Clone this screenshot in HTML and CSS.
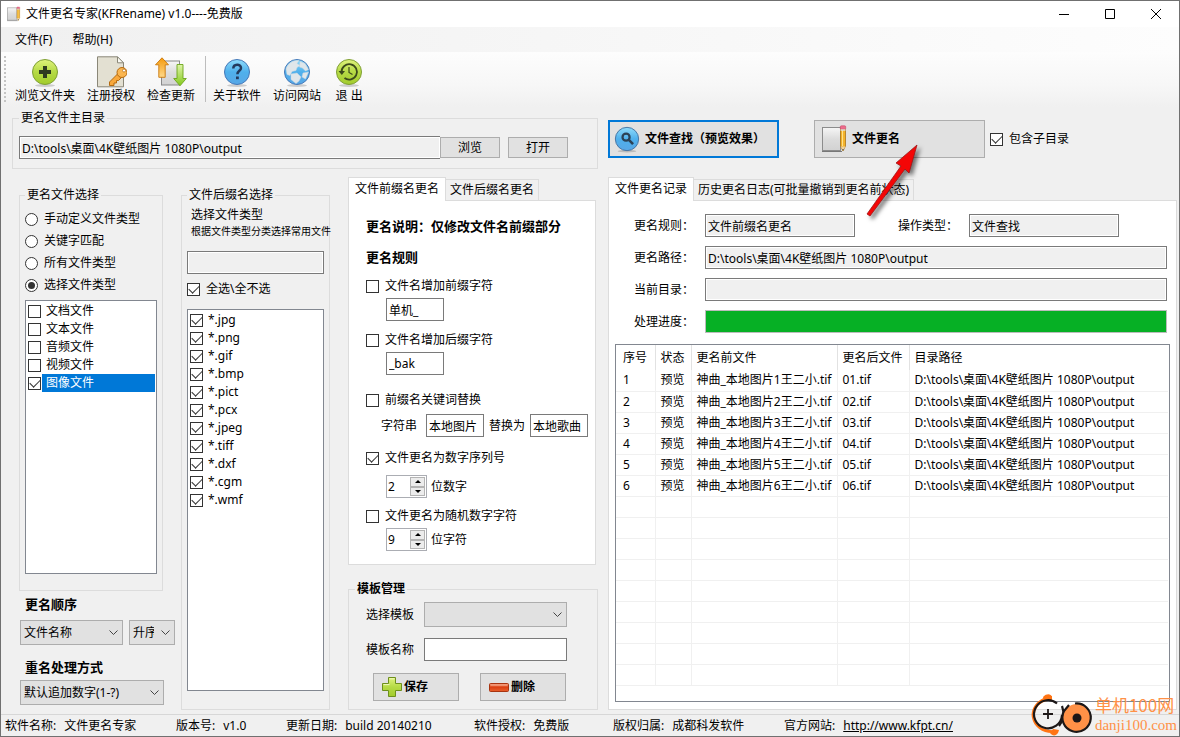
FILE: index.html
```html
<!DOCTYPE html>
<html lang="zh-CN">
<head>
<meta charset="utf-8">
<title>文件更名专家(KFRename) v1.0----免费版</title>
<link rel="stylesheet" href="styles.css">
</head>
<body>
<svg class="defs" aria-hidden="true">
  <defs>
    <linearGradient id="green" x1="0" y1="0" x2="0" y2="1"><stop offset="0" stop-color="#dff27c"/><stop offset=".5" stop-color="#b5da45"/><stop offset="1" stop-color="#a2cc2c"/></linearGradient>
    <linearGradient id="blue" x1="0" y1="0" x2="0" y2="1"><stop offset="0" stop-color="#8fdcfb"/><stop offset=".5" stop-color="#4fb0ec"/><stop offset="1" stop-color="#58a7e6"/></linearGradient>
    <linearGradient id="orange" x1="0" y1="0" x2="0" y2="1"><stop offset="0" stop-color="#f59a0c"/><stop offset="1" stop-color="#ffd98a"/></linearGradient>
    <linearGradient id="lime" x1="0" y1="0" x2="0" y2="1"><stop offset="0" stop-color="#dff5a8"/><stop offset="1" stop-color="#83c81c"/></linearGradient>
    <linearGradient id="paper" x1="0" y1="0" x2="0" y2="1"><stop offset="0" stop-color="#f6f6f6"/><stop offset=".5" stop-color="#dcdcdc"/><stop offset="1" stop-color="#d2d2d2"/></linearGradient>
    <linearGradient id="red" x1="0" y1="0" x2="0" y2="1"><stop offset="0" stop-color="#f08a62"/><stop offset=".5" stop-color="#dc4214"/><stop offset="1" stop-color="#e8602c"/></linearGradient>
    <symbol id="i-note" viewBox="0 0 28 30">
      <rect x="2.500" y="3.500" width="18" height="23" fill="url(#paper)" stroke="#8c8c8c"/>
      <path d="M2 27.500h20" stroke="#777" stroke-width="1"/>
      <path d="M20.500 5h5v17l-2.500 5-2.500-5z" fill="#f3b32b" stroke="#a9741a" stroke-width=".8"/>
      <path d="M22.500 6v16" stroke="#ffe08a"/>
      <rect x="20.300" y="1.800" width="5.400" height="3.500" rx="1" fill="#ee6c8c" stroke="#c44a68" stroke-width=".6"/>
      <path d="M20.500 6h5" stroke="#ddd" stroke-width="1.500"/>
      <path d="M20.800 22.500l2.200 4.500 2.200-4.500z" fill="#f0d3a0"/><path d="M22.200 25l.8 2 .8-2z" fill="#444"/>
    </symbol>
  </defs>
</svg>
<div class="window">
  <header class="titlebar">
    <svg class="app-icon"><use href="#i-note"/></svg>
    <h1 class="title">文件更名专家(KFRename) v1.0----免费版</h1>
    <div class="caption-buttons">
      <button aria-label="最小化"><svg viewBox="0 0 12 12"><path d="M1 6.500h10"/></svg></button>
      <button aria-label="最大化"><svg viewBox="0 0 12 12"><path d="M1.500 1.500h9v9h-9z"/></svg></button>
      <button aria-label="关闭"><svg viewBox="0 0 12 12"><path d="M1 1l10 10M11 1L1 11"/></svg></button>
    </div>
  </header>
  <nav class="menubar"><button>文件(F)</button><button>帮助(H)</button></nav>
  <div class="toolbar">
    <span class="grip"></span>
    <button class="tool"><svg viewBox="0 0 32 32"><ellipse cx="16" cy="29.500" rx="10" ry="1.500" fill="#ccc"/><circle cx="16" cy="16" r="12.500" fill="url(#green)" stroke="#7f9f35"/><path d="M14 10h4v4h4v4h-4v4h-4v-4h-4v-4h4z" fill="#2f3a20"/></svg><span>浏览文件夹</span></button>
    <button class="tool"><svg viewBox="0 0 32 32"><path d="M2.500.8h20l6 6v24h-26z" fill="#e3e0d2" stroke="#8a8778"/><path d="M22.500.8v6h6z" fill="#fbfaf4" stroke="#8a8778"/><path d="M23 17.500L14.500 26v3.500h4.500V27h2.500v-2.500h2l3-3z" fill="#f8a83c" stroke="#b56a10"/><circle cx="27" cy="16.500" r="5" fill="#fbb650" stroke="#b56a10"/><circle cx="29" cy="14.500" r="1.500" fill="#fff" stroke="#b56a10" stroke-width=".7"/></svg><span>注册授权</span></button>
    <button class="tool"><svg viewBox="0 0 32 32"><rect x="6.500" y="5" width="18" height="24" fill="url(#paper)" stroke="#888"/><path d="M7 1.800l6.500 7h-3.300v12.500H3.800V8.800H.5z" fill="url(#orange)" stroke="#c9770a" stroke-width=".9"/><path d="M22 8.500h6v14h3.300L25 29.800l-6.300-7.300H22z" fill="url(#lime)" stroke="#6ba51a" stroke-width=".9"/></svg><span>检查更新</span></button>
    <span class="divider"></span>
    <button class="tool"><svg viewBox="0 0 32 32"><ellipse cx="16" cy="29.500" rx="10" ry="1.500" fill="#ccc"/><circle cx="16" cy="16" r="12.500" fill="url(#blue)" stroke="#4578b8"/><path d="M12.300 12.500c0-5 7.700-5 7.700-.6 0 3-3.600 2.800-3.600 6.300" fill="none" stroke="#243a5c" stroke-width="2.500"/><path d="M15 20.500h2.800v2.700H15z" fill="#243a5c"/></svg><span>关于软件</span></button>
    <button class="tool"><svg viewBox="0 0 32 32"><ellipse cx="16" cy="29.500" rx="10" ry="1.500" fill="#ccc"/><circle cx="16" cy="16" r="12.500" fill="url(#blue)" stroke="#4578b8"/><path d="M5 13c2-6 7-9 13-8.500l-2 3 3 2-3 2-1 3-4 1-2 4-3-1zM19 5.500l5 2 3.500 6-3 1.500-3-3-3-1zM10 18l6-1 4 4-2 4-3 2.500-5-4zM22 17l5.500-1-3 7-3.500-2z" fill="#dfe6ea" stroke="#c9d6e0" stroke-width=".5"/></svg><span>访问网站</span></button>
    <button class="tool"><svg viewBox="0 0 32 32"><ellipse cx="16" cy="29.500" rx="10" ry="1.500" fill="#ccc"/><circle cx="16" cy="16" r="12.500" fill="url(#green)" stroke="#7f9f35"/><path d="M8.500 16a7.700 7.700 0 1 1 3 6" fill="none" stroke="#3c4a1c" stroke-width="1.800"/><path d="M5.500 15h6.500l-3.200 4z" fill="#3c4a1c"/><path d="M16 11v5.500l3.500 2" fill="none" stroke="#3c4a1c" stroke-width="1.200"/></svg><span>退 出</span></button>
  </div>

  <main class="main">
    <section class="left">
      <fieldset class="group dir-group">
        <legend>更名文件主目录</legend>
        <input class="field readonly dir-field" type="text" aria-label="更名文件主目录" value="D:\tools\桌面\4K壁纸图片 1080P\output" readonly>
        <button class="btn">浏览</button>
        <button class="btn">打开</button>
      </fieldset>
      <div class="columns">
        <div class="col-select">
          <fieldset class="group select-group">
            <legend>更名文件选择</legend>
            <label class="option"><input type="radio" name="mode">手动定义文件类型</label>
            <label class="option"><input type="radio" name="mode">关键字匹配</label>
            <label class="option"><input type="radio" name="mode">所有文件类型</label>
            <label class="option"><input type="radio" name="mode" checked>选择文件类型</label>
            <div class="listbox">
              <label><input type="checkbox"><span>文档文件</span></label>
              <label><input type="checkbox"><span>文本文件</span></label>
              <label><input type="checkbox"><span>音频文件</span></label>
              <label><input type="checkbox"><span>视频文件</span></label>
              <label class="selected"><input type="checkbox" checked><span>图像文件</span></label>
            </div>
          </fieldset>
          <h2 class="heading">更名顺序</h2>
          <div class="sort-row">
            <select class="combo" aria-label="更名顺序"><option>文件名称</option></select>
            <select class="combo combo-narrow" aria-label="升序或降序"><option>升序</option></select>
          </div>
          <h2 class="heading">重名处理方式</h2>
          <select class="combo combo-wide" aria-label="重名处理方式"><option>默认追加数字(1-?)</option></select>
        </div>

        <fieldset class="group suffix-group">
          <legend>文件后缀名选择</legend>
          <p class="suffix-title">选择文件类型</p>
          <p class="suffix-hint">根据文件类型分类选择常用文件</p>
          <input class="field readonly suffix-field" type="text" aria-label="文件类型" readonly>
          <label class="option all-option"><input type="checkbox" checked>全选\全不选</label>
          <div class="listbox suffix-list">
            <label><input type="checkbox" checked><span>*.jpg</span></label>
            <label><input type="checkbox" checked><span>*.png</span></label>
            <label><input type="checkbox" checked><span>*.gif</span></label>
            <label><input type="checkbox" checked><span>*.bmp</span></label>
            <label><input type="checkbox" checked><span>*.pict</span></label>
            <label><input type="checkbox" checked><span>*.pcx</span></label>
            <label><input type="checkbox" checked><span>*.jpeg</span></label>
            <label><input type="checkbox" checked><span>*.tiff</span></label>
            <label><input type="checkbox" checked><span>*.dxf</span></label>
            <label><input type="checkbox" checked><span>*.cgm</span></label>
            <label><input type="checkbox" checked><span>*.wmf</span></label>
          </div>
        </fieldset>

        <div class="col-rules">
          <div class="tabs" role="tablist">
            <button class="tab active" role="tab" aria-selected="true">文件前缀名更名</button>
            <button class="tab" role="tab" aria-selected="false">文件后缀名更名</button>
          </div>
          <div class="panel rules">
            <h2 class="rule-title">更名说明：仅修改文件名前缀部分</h2>
            <h2 class="rule-title">更名规则</h2>
            <div class="rule">
              <label class="option"><input type="checkbox">文件名增加前缀字符</label>
              <div class="sub"><input class="field short" type="text" aria-label="前缀字符" value="单机_"></div>
            </div>
            <div class="rule">
              <label class="option"><input type="checkbox">文件名增加后缀字符</label>
              <div class="sub"><input class="field short" type="text" aria-label="后缀字符" value="_bak"></div>
            </div>
            <div class="rule">
              <label class="option"><input type="checkbox">前缀名关键词替换</label>
              <div class="sub replace"><label for="from">字符串</label><input id="from" class="field short" type="text" value="本地图片"><label for="to">替换为</label><input id="to" class="field short" type="text" value="本地歌曲"></div>
            </div>
            <div class="rule">
              <label class="option"><input type="checkbox" checked>文件更名为数字序列号</label>
              <div class="sub"><div class="spinner"><input id="digits" type="text" value="2"><div class="steps"><button aria-label="增加"></button><button class="down" aria-label="减少"></button></div></div><label for="digits">位数字</label></div>
            </div>
            <div class="rule">
              <label class="option"><input type="checkbox">文件更名为随机数字字符</label>
              <div class="sub"><div class="spinner"><input id="chars" type="text" value="9"><div class="steps"><button aria-label="增加"></button><button class="down" aria-label="减少"></button></div></div><label for="chars">位字符</label></div>
            </div>
          </div>
          <fieldset class="group template-group">
            <legend>模板管理</legend>
            <div class="template-row"><label for="tpl">选择模板</label><select id="tpl" class="combo"><option></option></select></div>
            <div class="template-row"><label for="tplname">模板名称</label><input id="tplname" class="field" type="text"></div>
            <div class="template-actions">
              <button class="btn icon-btn"><svg viewBox="0 0 24 24"><path d="M8.500 2.500h7v6h6v7h-6v6h-7v-6h-6v-7h6z" fill="url(#green)" stroke="#6d8f1c"/><path d="M9.500 3.800h5M3.500 9.600h6" stroke="#f1fac0"/></svg>保存</button>
              <button class="btn icon-btn"><svg viewBox="0 0 24 24"><rect x="2.500" y="8.500" width="19" height="8" rx="1" fill="url(#red)" stroke="#a83410"/><path d="M3.500 10h17" stroke="#f7b59c"/></svg>删除</button>
            </div>
          </fieldset>
        </div>
      </div>
    </section>

    <section class="right">
      <div class="actions">
        <button class="btn big primary"><svg viewBox="0 0 30 30"><ellipse cx="15" cy="28" rx="10" ry="1.500" fill="#bbb"/><circle cx="15" cy="15" r="12.500" fill="url(#blue)" stroke="#44719f"/><circle cx="14" cy="13" r="3.800" fill="none" stroke="#2b4256" stroke-width="2.400"/><path d="M17 16l4.500 4.500" stroke="#2b4256" stroke-width="2.800"/></svg>文件查找（预览效果）</button>
        <div class="rename-wrap">
          <button class="btn big"><svg viewBox="0 0 28 30"><use href="#i-note"/></svg>文件更名</button>
          <svg class="arrow" viewBox="0 0 64 86" aria-hidden="true"><path d="M5 79L39 31 34 28 55 10 47 38 43 34 8 81z" fill="#f40606" stroke="#9c1515" stroke-width=".8"/></svg>
        </div>
        <label class="option"><input type="checkbox" checked>包含子目录</label>
      </div>
      <div class="tabs" role="tablist">
        <button class="tab active" role="tab" aria-selected="true">文件更名记录</button>
        <button class="tab" role="tab" aria-selected="false">历史更名日志(可批量撤销到更名前状态)</button>
      </div>
      <div class="panel record">
        <div class="info">
          <label for="rule">更名规则：</label>
          <div class="info-pair"><input id="rule" class="field readonly medium" type="text" value="文件前缀名更名" readonly><label for="op">操作类型：</label><input id="op" class="field readonly medium" type="text" value="文件查找" readonly></div>
          <label for="path">更名路径：</label>
          <input id="path" class="field readonly" type="text" value="D:\tools\桌面\4K壁纸图片 1080P\output" readonly>
          <label for="cur">当前目录：</label>
          <input id="cur" class="field readonly" type="text" readonly>
          <label for="prog">处理进度：</label>
          <progress id="prog" value="100" max="100"></progress>
        </div>
        <div class="grid-box">
          <table class="grid">
            <colgroup><col class="c-no"><col class="c-state"><col class="c-before"><col class="c-after"><col></colgroup>
            <thead><tr><th>序号</th><th>状态</th><th>更名前文件</th><th>更名后文件</th><th>目录路径</th></tr></thead>
            <tbody>
              <tr><td>1</td><td>预览</td><td>神曲_本地图片1王二小.tif</td><td>01.tif</td><td>D:\tools\桌面\4K壁纸图片 1080P\output</td></tr>
              <tr><td>2</td><td>预览</td><td>神曲_本地图片2王二小.tif</td><td>02.tif</td><td>D:\tools\桌面\4K壁纸图片 1080P\output</td></tr>
              <tr><td>3</td><td>预览</td><td>神曲_本地图片3王二小.tif</td><td>03.tif</td><td>D:\tools\桌面\4K壁纸图片 1080P\output</td></tr>
              <tr><td>4</td><td>预览</td><td>神曲_本地图片4王二小.tif</td><td>04.tif</td><td>D:\tools\桌面\4K壁纸图片 1080P\output</td></tr>
              <tr><td>5</td><td>预览</td><td>神曲_本地图片5王二小.tif</td><td>05.tif</td><td>D:\tools\桌面\4K壁纸图片 1080P\output</td></tr>
              <tr><td>6</td><td>预览</td><td>神曲_本地图片6王二小.tif</td><td>06.tif</td><td>D:\tools\桌面\4K壁纸图片 1080P\output</td></tr>
              <tr><td></td><td></td><td></td><td></td><td></td></tr>
              <tr><td></td><td></td><td></td><td></td><td></td></tr>
              <tr><td></td><td></td><td></td><td></td><td></td></tr>
              <tr><td></td><td></td><td></td><td></td><td></td></tr>
              <tr><td></td><td></td><td></td><td></td><td></td></tr>
              <tr><td></td><td></td><td></td><td></td><td></td></tr>
              <tr><td></td><td></td><td></td><td></td><td></td></tr>
              <tr><td></td><td></td><td></td><td></td><td></td></tr>
              <tr><td></td><td></td><td></td><td></td><td></td></tr>
            </tbody>
          </table>
        </div>
      </div>
    </section>
  </main>

  <footer class="statusbar">
    <div><span>软件名称:</span><span>文件更名专家</span></div>
    <div><span>版本号:</span><span>v1.0</span></div>
    <div><span>更新日期:</span><span>build 20140210</span></div>
    <div><span>软件授权:</span><span>免费版</span></div>
    <div><span>版权归属:</span><span>成都科发软件</span></div>
    <div><span>官方网站:</span><a href="http://www.kfpt.cn/">http://www.kfpt.cn/</a></div>
  </footer>

  <div class="watermark">
    <svg viewBox="0 0 64 42" aria-hidden="true">
      <path d="M22 2C9 3 0 13 2 24c2 10 12 16 22 15l2-3C15 37 6 32 5 23 4 14 10 7 22 6z" fill="#ff7414"/>
      <path d="M13 3c4-4 8-3 9 0v3l-8 1zM20 39c3 4 8 3 9-3l-6-1z" fill="#ff7414"/>
      <path d="M27 9.500A14 14 0 1 0 32 21" fill="none" stroke="#1c1717" stroke-width="2.200"/>
      <path d="M18 15v10M13 20h10" stroke="#1c1717" stroke-width="1.800"/>
      <path d="M32 12c3 8 1 15-3 20" fill="none" stroke="#1c1717" stroke-width="2.200"/>
      <circle cx="47" cy="24" r="14" fill="#ff9147"/>
      <path d="M45 9.500A14.200 14.200 0 1 1 34 17l5-6" fill="none" stroke="#1c1717" stroke-width="2.200"/>
      <circle cx="47" cy="24" r="4.500" fill="#1c1717"/>
    </svg>
    <div class="watermark-text"><span class="wm-cn">单机100网</span><span class="wm-en">danji100.com</span></div>
  </div>
</div>
</body>
</html>
```
FILE: styles.css
```css
* { box-sizing: border-box; }

body {
  margin: 0;
  background: #f0f0f0;
  color: #000;
  font: 12px/16px "Noto Sans", "Noto Sans CJK SC", sans-serif;
}

button, input, select { font: inherit; color: inherit; margin: 0; }
button { background: none; border: 0; padding: 0; white-space: nowrap; }
h1, h2, p { margin: 0; font-size: inherit; font-weight: normal; }
.defs { position: absolute; width: 0; height: 0; }

.window {
  position: relative;
  display: flex;
  flex-direction: column;
  min-height: 100vh;
  border: 1px solid #707070;
}

/* Title bar, menu and toolbar */
.titlebar { display: flex; align-items: center; height: 26px; padding-left: 5px; background: #fff; }
.app-icon { width: 15px; height: 16px; margin-right: 5px; }
.title { flex: 1; }
.caption-buttons { display: flex; }
.caption-buttons button { width: 46px; height: 26px; }
.caption-buttons svg { width: 12px; height: 12px; fill: none; stroke: #000; display: block; margin: auto; }

.menubar { display: flex; gap: 20px; height: 25px; padding-left: 14px; background: linear-gradient(90deg, #f0f0f0, #fdfdfd); }

.toolbar { display: flex; align-items: flex-start; height: 55px; padding: 4px 0 0 3px; background: linear-gradient(#fdfdfd, #f7f7f7 60%, #f0f0f0); }
.grip { width: 2px; height: 46px; margin-right: 9px; background: repeating-linear-gradient(#c4c4c4 0 2px, transparent 2px 4px); }
.tool { margin-right: 12px; line-height: 16px; }
.tool svg { display: block; width: 32px; height: 32px; margin: 0 auto; }
.tool span { display: block; }
.divider { width: 1px; height: 46px; margin: 0 7px 0 -2px; background: #bdbdbd; }

/* Shared controls */
.group { min-width: 0; margin: 0; padding: 0 6px; border: 1px solid #dcdcdc; }
.group legend { height: 16px; padding: 0 2px; }

.field { height: 23px; min-width: 0; padding: 0 2px; border: 1px solid #7a7a7a; border-radius: 0; background: #fff; outline: 0; }
.readonly { background: #f0f0f0; box-shadow: inset 0 0 0 1px #fff; }
.short { width: 58px; }
.medium { width: 150px; }

.btn { border: 1px solid #adadad; background: #e1e1e1; }

.combo {
  height: 25px;
  padding: 0 20px 0 3px;
  border: 1px solid #adadad;
  border-radius: 0;
  appearance: none;
  background: #e1e1e1 url("data:image/svg+xml,%3Csvg xmlns='http://www.w3.org/2000/svg' width='9' height='6'%3E%3Cpath d='M.5.5l4 4 4-4' fill='none' stroke='%23444'/%3E%3C/svg%3E") no-repeat right 4px center;
}

input[type="checkbox"], input[type="radio"] {
  display: grid;
  place-items: center;
  flex: none;
  width: 13px;
  height: 13px;
  border: 1px solid #333;
  background: #fff;
  appearance: none;
}
input[type="radio"] { border-radius: 50%; }
input[type="checkbox"]:checked::before {
  content: "";
  width: 9px;
  height: 5px;
  margin-bottom: 3px;
  border: solid #333;
  border-width: 0 0 1px 1px;
  transform: rotate(-45deg);
}
input[type="radio"]:checked::before { content: ""; width: 7px; height: 7px; border-radius: 50%; background: #333; }

.option { display: flex; align-items: center; gap: 6px; white-space: nowrap; }

.listbox { flex: 1; padding: 1px; border: 1px solid #828790; background: #fff; }
.listbox label { display: flex; align-items: center; gap: 1px; height: 18px; padding-left: 1px; }
.listbox span { flex: 1; padding-left: 4px; line-height: 18px; }
.selected span { background: #0078d7; color: #fff; }

.tabs { display: flex; align-items: flex-end; height: 23px; }
.tab { height: 21px; padding: 0 4px; border: 1px solid #dcdcdc; border-width: 1px 1px 0 0; }
.tab.active { z-index: 1; height: 24px; margin-bottom: -1px; padding: 0 6px 2px; border-left-width: 1px; background: #fff; }
.panel { border: 1px solid #dcdcdc; background: #fff; }

/* Main area */
.main { display: flex; flex: 1; gap: 10px; padding: 3px 2px 4px 11px; }
.left { display: flex; flex-direction: column; flex: none; width: 586px; }
.dir-group { display: flex; align-items: center; height: 59px; padding-top: 10px; }
.dir-field { width: 421px; border-right: 0; }
.dir-group .btn { width: 60px; height: 21px; margin-right: 8px; }

.columns { display: flex; flex: 1; padding: 18px 0 0 7px; }
.col-select { display: flex; flex-direction: column; width: 162px; }
.select-group { display: flex; flex-direction: column; flex: 1; width: 144px; padding: 5px 5px 16px; }
.select-group .option { height: 22px; }
.select-group .listbox { margin-top: 4px; }
.heading { margin: 5px 0 8px 6px; font-weight: bold; font-size: 13px; }
.sort-row { display: flex; gap: 6px; margin: 0 0 9px 1px; }
.sort-row .combo { width: 103px; }
.sort-row .combo-narrow { width: 46px; }
.combo-wide { width: 144px; margin: -3px 0 5px 1px; }

.suffix-group { display: flex; flex-direction: column; flex: none; width: 149px; padding: 4px 5px 18px; }
.suffix-title { padding-left: 4px; }
.suffix-hint { padding-left: 4px; font-size: 10px; white-space: nowrap; }
.suffix-field { width: 137px; margin-top: 12px; }
.all-option { height: 16px; margin: 7px 0 12px; }
.suffix-list { width: 137px; }

.col-rules { display: flex; flex-direction: column; flex: 1; margin: -10px 0 0 18px; }
.rules { flex: 1; width: 248px; padding: 17px 7px 0 17px; }
.rule-title { height: 31px; font-size: 13px; font-weight: bold; }
.rule { height: 54px; }
.rule:nth-of-type(2) { height: 60px; }
.rule:nth-of-type(3), .rule:nth-of-type(4) { height: 58px; }
.rule .option { height: 12px; }
.sub { display: flex; align-items: center; gap: 4px; height: 23px; margin-top: 6px; padding-left: 20px; }
.rule:nth-of-type(3) .sub { margin-top: 8px; }
.rule:nth-of-type(4) .sub { margin-top: 11px; }
.sub.replace { gap: 5px; padding-left: 15px; white-space: nowrap; }
.replace .short:first-of-type { margin-left: 4px; }
.spinner { display: flex; width: 41px; height: 23px; padding: 1px; border: 1px solid #abadb3; background: #fff; }
.spinner input { flex: 1; min-width: 0; padding: 0; border: 0; outline: 0; }
.steps { display: flex; flex-direction: column; width: 15px; }
.steps button { display: grid; place-items: center; flex: 1; border: 1px solid #b4b4b4; background: #ececec; }
.steps button::before { content: ""; border: solid transparent; border-width: 0 3px 3px; border-bottom-color: #000; }
.steps .down::before { border-width: 3px 3px 0; border-top-color: #000; }

.template-group { margin-top: 16px; padding: 5px 17px 8px; }
.template-group legend { margin-left: -11px; font-weight: bold; }
.template-row { display: flex; align-items: center; gap: 10px; margin-bottom: 11px; }
.template-row:nth-of-type(2) { margin-bottom: 12px; }
.template-row .combo, .template-row .field { width: 143px; }
.template-actions { display: flex; gap: 21px; padding-left: 7px; }
.icon-btn { display: flex; align-items: center; width: 86px; height: 28px; padding-left: 6px; font-weight: bold; }
.icon-btn svg { width: 24px; height: 24px; }

.right { display: flex; flex-direction: column; flex: 1; min-width: 0; }
.actions { display: flex; align-items: center; height: 38px; margin: 10px 0 19px; }
.big { display: flex; align-items: center; gap: 4px; width: 171px; height: 38px; padding-left: 5px; font-weight: bold; }
.big svg { width: 28px; height: 30px; }
.primary { border: 2px solid #0078d7; padding-left: 3px; }
.rename-wrap { position: relative; margin: 0 5px 0 35px; }
.arrow { position: absolute; left: 48px; top: 15px; width: 64px; height: 86px; z-index: 2; filter: drop-shadow(3px 3px 2px #0008); pointer-events: none; }

.record { display: flex; flex-direction: column; flex: 1; padding: 13px 6px 7px; }
.info { display: grid; grid-template-columns: 71px 1fr; align-items: center; row-gap: 9px; margin: 0 3px 11px 19px; }
.info-pair { display: flex; align-items: center; }
.info-pair label { margin: 0 11px 0 43px; }
progress { display: block; width: 100%; height: 23px; border: 1px solid #bcbcbc; appearance: none; background: #e6e6e6; }
progress::-webkit-progress-bar { background: #e6e6e6; }
progress::-webkit-progress-value { background: #06b025; }

.grid-box { flex: 1; border: 1px solid #828790; padding-right: 1px; }
.grid { width: 100%; border-collapse: collapse; table-layout: fixed; }
.c-no { width: 39px; }
.c-state { width: 36px; }
.c-before { width: 146px; }
.c-after { width: 72px; }
.grid th, .grid td { height: 21px; padding: 0 0 0 5px; border: solid #f0f0f0; border-width: 0 1px 1px 0; text-align: left; font-weight: normal; white-space: nowrap; }
.grid th { height: 25px; border-bottom: 0; border-color: #e2e2e2; }
.grid th:first-child, .grid td:first-child { padding-left: 7px; }
.grid th:last-child, .grid td:last-child { border-right: 0; }

/* Status bar */
.statusbar { display: grid; grid-template-columns: 171px 110px 188px 139px 171px 1fr; align-items: center; height: 22px; padding-left: 4px; border-top: 1px solid #d7d7d7; }
.statusbar div { display: flex; gap: 8px; white-space: nowrap; }
.statusbar a { color: #000; }

.watermark { position: absolute; right: 2px; bottom: 0; display: flex; align-items: center; gap: 1px; color: #ff9147; }
.watermark svg { flex: none; width: 64px; height: 42px; }
.watermark-text { display: flex; flex-direction: column; white-space: nowrap; }
.wm-cn { font: 17px/20px "Noto Sans CJK SC", sans-serif; }
.wm-en { font: 15px/20px "Liberation Serif", serif; }
```
